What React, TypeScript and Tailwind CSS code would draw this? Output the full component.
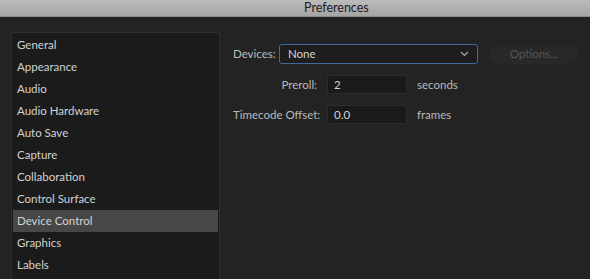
const sections = [
  'General',
  'Appearance',
  'Audio',
  'Audio Hardware',
  'Auto Save',
  'Capture',
  'Collaboration',
  'Control Surface',
  'Device Control',
  'Graphics',
  'Labels',
];

export default function App() {
  const selected = 'Device Control';

  return (
    <div className="w-[590px] h-[279px] overflow-hidden bg-[#232323] flex flex-col text-[11.5px] font-['Lato',sans-serif]">
      <div className="h-[17px] shrink-0 bg-gradient-to-b from-[#bcbbbc] to-[#a5a4a5] border-b border-[#8d8c8d] flex items-center pl-[304px] text-[12.5px] leading-none text-[#1c1c1c]">
        Preferences
      </div>

      <div className="flex pl-[11px] pt-[15px] gap-[13px]">
        <div className="w-[209px] h-[300px] shrink-0 bg-[#1b1b1b] border border-[#2f2f2f] rounded-[2px] p-[1px]">
          {sections.map((s) => (
            <div
              key={s}
              className={`h-[22px] flex items-center pl-[4px] text-[#d2d2d2] ${s === selected ? 'bg-[#474747]' : ''}`}
            >
              {s}
            </div>
          ))}
        </div>

        <div className="flex flex-col pt-[12px] text-[#bababa]">
          <div className="flex items-center h-[20px]">
            <span className="w-[46px] whitespace-nowrap">Devices:</span>
            <div className="w-[199px] h-[20px] flex items-center justify-between px-[8px] bg-[#1d1d1d] border border-[#3f6b9d] rounded-[3px] text-[#d6d6d6]">
              <span>None</span>
              <svg width="9" height="6" viewBox="0 0 9 6" fill="none">
                <path d="M1 1l3.5 3.5L8 1" stroke="#a9a9a9" strokeWidth="1.2" />
              </svg>
            </div>
            <div className="ml-[12px] w-[88px] h-[19px] rounded-full bg-[#282828] flex items-center justify-center text-[#575757]">
              Options...
            </div>
          </div>

          <div className="grid grid-cols-[84px_80px_auto] items-center gap-x-[10px] gap-y-[11px] mt-[11px]">
            <span className="text-right whitespace-nowrap">Preroll:</span>
            <div className="h-[19px] bg-[#1a1a1a] border border-[#2c2c2c] rounded-[2px] flex items-center px-[6px] text-[#d6d6d6]">2</div>
            <span>seconds</span>
            <span className="text-right whitespace-nowrap">Timecode Offset:</span>
            <div className="h-[19px] bg-[#1a1a1a] border border-[#2c2c2c] rounded-[2px] flex items-center px-[6px] text-[#d6d6d6]">0.0</div>
            <span>frames</span>
          </div>
        </div>
      </div>
    </div>
  );
}
